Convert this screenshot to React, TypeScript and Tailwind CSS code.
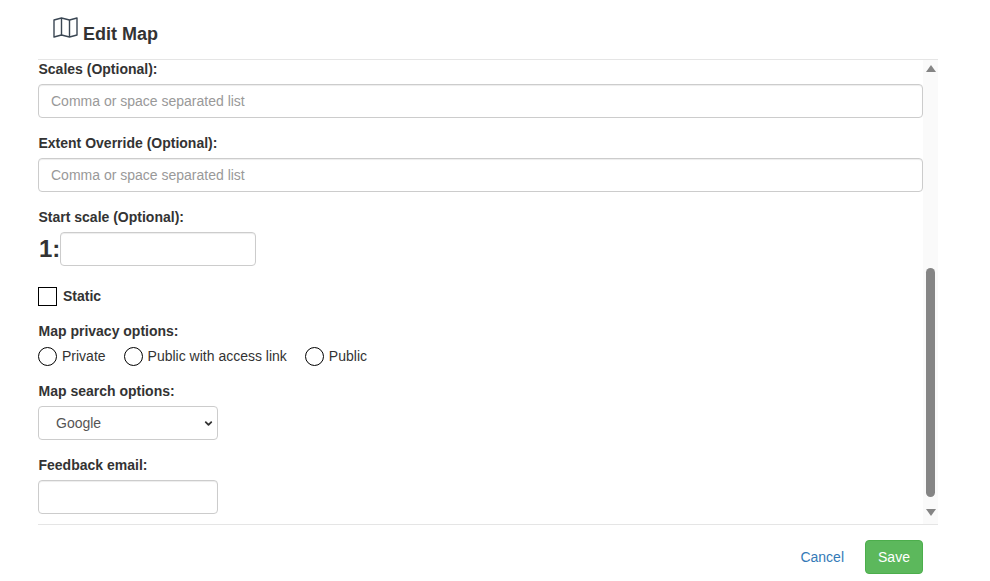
import { ChevronDown } from 'lucide-react';

const inputClass =
  'block w-full h-[34px] rounded border border-[#ccc] bg-white px-3 text-sm text-[#555] placeholder:text-[#999] shadow-[inset_0_1px_1px_rgba(0,0,0,0.075)]';
const labelClass = 'block mb-[5px] pl-[0.5px] text-sm leading-5 font-bold text-[#333]';

function MapIcon() {
  return (
    <svg width="25" height="21" viewBox="0 0 25 21" fill="none" stroke="#3a4653" strokeWidth="1.4" strokeLinejoin="round" className="mb-[6px]">
      <path d="M1 3 8.5 1 16.5 3 24 1V18L16.5 20 8.5 18 1 20Z" />
      <path d="M8.5 1V18M16.5 3V20" />
    </svg>
  );
}

function Radio({ label }: { label: string }) {
  return (
    <label className="flex items-center gap-[5px] text-sm leading-5 text-[#333]">
      <span className="w-[19px] h-[19px] rounded-full border border-black bg-white" />
      {label}
    </label>
  );
}

export default function App() {
  return (
    <div className="w-[990px] h-[581px] overflow-hidden bg-white font-['Liberation_Sans',sans-serif] text-[#333]">
      <div className="ml-[38px] w-[900px]">
        <header className="h-[60px] border-b border-[#e5e5e5] pl-[15px] flex items-end pb-[15px] gap-[5px]">
          <MapIcon />
          <h4 className="text-lg leading-5 font-bold text-[#333]">Edit Map</h4>
        </header>

        <div className="h-[464px] flex overflow-hidden">
          <div className="w-[885px] -mt-px">
            <div className="mb-[15px]">
              <label className={labelClass}>Scales (Optional):</label>
              <input className={inputClass} placeholder="Comma or space separated list" />
            </div>
            <div className="mb-[15px]">
              <label className={labelClass}>Extent Override (Optional):</label>
              <input className={inputClass} placeholder="Comma or space separated list" />
            </div>
            <div className="mb-[21px]">
              <label className={labelClass}>Start scale (Optional):</label>
              <div className="flex items-center">
                <span className="pl-px text-2xl font-bold leading-[34px] text-[#333]">1:</span>
                <input className={`${inputClass} !w-[196px]`} />
              </div>
            </div>
            <label className="flex items-start h-5 gap-[6px] mb-[14px] text-sm leading-[18px] font-bold">
              <span className="w-[19px] h-[19px] border border-black bg-white" />
              Static
            </label>
            <div className="mb-[15px]">
              <label className={labelClass}>Map privacy options:</label>
              <div className="flex items-center gap-[18px]">
                <Radio label="Private" />
                <Radio label="Public with access link" />
                <Radio label="Public" />
              </div>
            </div>
            <div className="mb-[15px]">
              <label className={labelClass}>Map search options:</label>
              <div className="relative w-[180px] h-[34px] rounded border border-[#ccc] bg-white px-[17px] flex items-center text-sm text-[#555]">
                Google
                <ChevronDown size={11} strokeWidth={4} className="absolute right-[3px] top-[11px] text-[#333]" />
              </div>
            </div>
            <div>
              <label className={labelClass}>Feedback email:</label>
              <input className={`${inputClass} !w-[180px]`} />
            </div>
          </div>

          <div className="w-[15px] bg-[#fafafa] flex flex-col items-center">
            <svg width="10" height="7" viewBox="0 0 10 7" className="mt-[5px] shrink-0 fill-[#858585]">
              <path d="M5 0 10 7H0Z" />
            </svg>
            <div className="w-[9px] h-[229px] mt-[196px] rounded-full bg-[#858585]" />
            <svg width="10" height="7" viewBox="0 0 10 7" className="mt-[12px] shrink-0 fill-[#858585]">
              <path d="M5 7 10 0H0Z" />
            </svg>
          </div>
        </div>

        <footer className="border-t border-[#e5e5e5] h-[57px] pt-[15px] pr-[15px] flex justify-end items-start gap-[21px]">
          <a className="text-sm leading-[34px] text-[#337ab7]">Cancel</a>
          <button className="w-[58px] h-[34px] rounded bg-[#5cb85c] border border-[#4cae4c] text-sm text-white">Save</button>
        </footer>
      </div>
    </div>
  );
}
